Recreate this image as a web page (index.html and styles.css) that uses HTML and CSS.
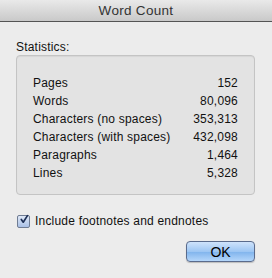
FILE: index.html
```html
<!DOCTYPE html>
<html lang="en">
<head>
    <meta charset="UTF-8">
    <title>Word Count</title>
    <link rel="stylesheet" href="styles.css">
</head>
<body>
    <div class="window">
        <div class="titlebar">Word Count</div>
        <div class="content">
            <div class="group-label">Statistics:</div>
            <div class="stats">
                <div class="row"><span>Pages</span><span>152</span></div>
                <div class="row"><span>Words</span><span>80,096</span></div>
                <div class="row"><span>Characters (no spaces)</span><span>353,313</span></div>
                <div class="row"><span>Characters (with spaces)</span><span>432,098</span></div>
                <div class="row"><span>Paragraphs</span><span>1,464</span></div>
                <div class="row"><span>Lines</span><span>5,328</span></div>
            </div>
            <label class="check">
                <span class="box">
                    <svg width="13" height="13" viewBox="0 0 13 13">
                        <path d="M3 6.5 L5.5 10 L11 1.5" fill="none" stroke="#1d2f55" stroke-width="2.2" stroke-linecap="round" stroke-linejoin="round"/>
                    </svg>
                </span>
                Include footnotes and endnotes
            </label>
            <div class="actions">
                <button class="ok">OK</button>
            </div>
        </div>
    </div>
</body>
</html>
```

FILE: styles.css
```css
* {
    margin: 0;
    padding: 0;
    box-sizing: border-box;
}

body {
    font-family: 'Liberation Sans', Arial, sans-serif;
    font-size: 12px;
    letter-spacing: 0.2px;
    color: #111;
    background: #ececec;
}

.window {
    width: 272px;
    height: 278px;
    background: #ececec;
}

.titlebar {
    height: 22px;
    line-height: 22px;
    text-align: center;
    font-size: 13.5px;
    letter-spacing: 0.3px;
    color: #333;
    background: linear-gradient(#e9e9e9, #c9c9c9);
    border-bottom: 1px solid #545454;
}

.content {
    padding: 18px 17px 0 16px;
}

.group-label {
    height: 15px;
    line-height: 15px;
}

.stats {
    height: 140px;
    padding: 18px 16px 0 16px;
    background: #e3e3e3;
    border: 1px solid #c4c4c4;
    border-radius: 4px;
    box-shadow: inset 0 1px 1px rgba(0,0,0,0.06);
}

.row {
    display: flex;
    justify-content: space-between;
    height: 18px;
    line-height: 18px;
}

.check {
    display: flex;
    align-items: center;
    gap: 5px;
    margin-top: 18px;
    height: 16px;
}

.check .box {
    width: 13px;
    height: 13px;
    margin-left: 1px;
    border: 1px solid #6f7c93;
    border-radius: 2px;
    background: linear-gradient(#dfe8f6, #a9c0e6);
    display: flex;
    align-items: center;
    justify-content: center;
}

.check .box svg {
    display: block;
    margin-top: -3px;
    margin-left: 1px;
}

.actions {
    display: flex;
    justify-content: flex-end;
    margin-top: 12px;
}

.ok {
    width: 69px;
    height: 21px;
    font-family: 'Liberation Sans', Arial, sans-serif;
    font-size: 14px;
    color: #000;
    border: 1px solid #5a6b8c;
    border-radius: 4px;
    background: linear-gradient(#cfe3fb 0%, #9dc6f3 50%, #7fb3ec 51%, #b4d6fa 100%);
    box-shadow: 0 1px 1px rgba(0,0,0,0.2);
}
```
